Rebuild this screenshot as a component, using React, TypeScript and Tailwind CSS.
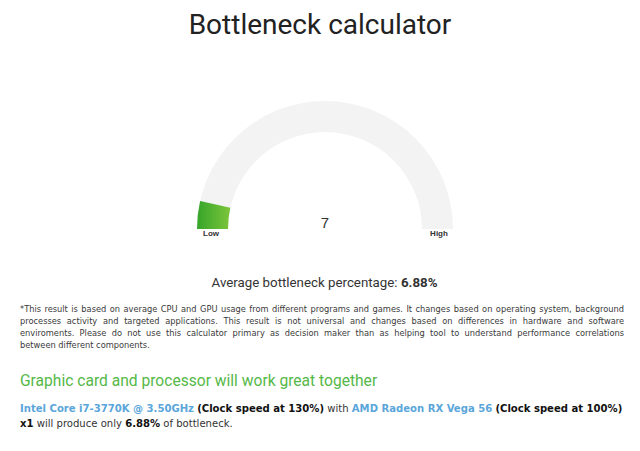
const CX = 135;
const CY = 130;
const R_OUT = 128;
const R_IN = 97;

// point on the arc, angle 0 = left, 180 = right
const pt = (r: number, deg: number) => {
  const a = (Math.PI * deg) / 180;
  return [CX - r * Math.cos(a), CY - r * Math.sin(a)];
};

const bandPath = (from: number, to: number) => {
  const [x1, y1] = pt(R_OUT, from);
  const [x2, y2] = pt(R_OUT, to);
  const [x3, y3] = pt(R_IN, to);
  const [x4, y4] = pt(R_IN, from);
  const large = to - from > 180 ? 1 : 0;
  return `M${x1} ${y1} A${R_OUT} ${R_OUT} 0 ${large} 1 ${x2} ${y2} L${x3} ${y3} A${R_IN} ${R_IN} 0 ${large} 0 ${x4} ${y4} Z`;
};

function Gauge({ value }: { value: number }) {
  const end = (value / 100) * 180;
  return (
    <svg width="270" height="145" viewBox="0 0 270 145">
      <defs>
        <linearGradient id="g" x1="0" x2="1" y1="0" y2="0">
          <stop offset="0%" stopColor="#35a52a" />
          <stop offset="100%" stopColor="#7dc53b" />
        </linearGradient>
      </defs>
      <path d={bandPath(0, 180)} fill="#f3f3f3" />
      <path d={bandPath(0, end)} fill="url(#g)" />
      <text x={CX} y={CY - 1} textAnchor="middle" fontSize="15" fill="#333" fontFamily="Liberation Sans, Arial, sans-serif">
        {value}
      </text>
      <text x="21" y="137" textAnchor="middle" fontSize="8" fontWeight="bold" fill="#333" fontFamily="Liberation Sans, Arial, sans-serif">
        Low
      </text>
      <text x="249" y="137" textAnchor="middle" fontSize="8" fontWeight="bold" fill="#333" fontFamily="Liberation Sans, Arial, sans-serif">
        High
      </text>
    </svg>
  );
}

const footLines = [
  '*This result is based on average CPU and GPU usage from different programs and games. It changes based on operating system, background',
  'processes activity and targeted applications. This result is not universal and changes based on differences in hardware and software',
  'enviroments. Please do not use this calculator primary as decision maker than as helping tool to understand performance correlations',
];

export default function App() {
  return (
    <div className="w-[640px] h-[451px] bg-white overflow-hidden">
      <h1 className="pt-[8px] text-center text-[28px] leading-[34px] text-[#222] font-['Roboto',sans-serif]">
        Bottleneck calculator
      </h1>

      {/* gauge */}
      <div className="flex justify-center mt-[57px] pl-[10px]">
        <Gauge value={7} />
      </div>

      <p className="mt-[31px] text-center text-[13.3px] leading-[16px] text-[#333] font-['Roboto',sans-serif] pl-[9px]">
        Average bottleneck percentage: <b className="font-bold">6.88%</b>
      </p>

      {/* disclaimer */}
      <div className="mt-[12px] pl-[20px] pr-[16px] text-[9.2px] leading-[12px] text-[#3a3a3a] font-['DejaVu_Sans_Condensed','DejaVu_Sans',sans-serif]">
        {footLines.map((l) => (
          <div key={l} className="text-justify [text-align-last:justify]">
            {l}
          </div>
        ))}
        <div>between different components.</div>
      </div>

      <h2 className="mt-[20px] px-[20px] text-[15.6px] leading-[20px] text-[#55b848] font-['Roboto',sans-serif]">
        Graphic card and processor will work great together
      </h2>

      <div className="mt-[10px] px-[20px] text-[11.2px] leading-[15px] text-[#333] font-['DejaVu_Sans_Condensed','DejaVu_Sans',sans-serif]">
        <div className="whitespace-nowrap">
          <span className="font-bold text-[#5aa6da]">Intel Core i7-3770K @ 3.50GHz</span>{' '}
          <b className="text-[#111]">(Clock speed at 130%)</b> with{' '}
          <span className="font-bold text-[#5aa6da]">AMD Radeon RX Vega 56</span>{' '}
          <b className="text-[#111]">(Clock speed at 100%)</b>
        </div>
        <div>
          <b className="text-[#111]">x1</b> will produce only <b className="text-[#111]">6.88%</b> of bottleneck.
        </div>
      </div>
    </div>
  );
}
